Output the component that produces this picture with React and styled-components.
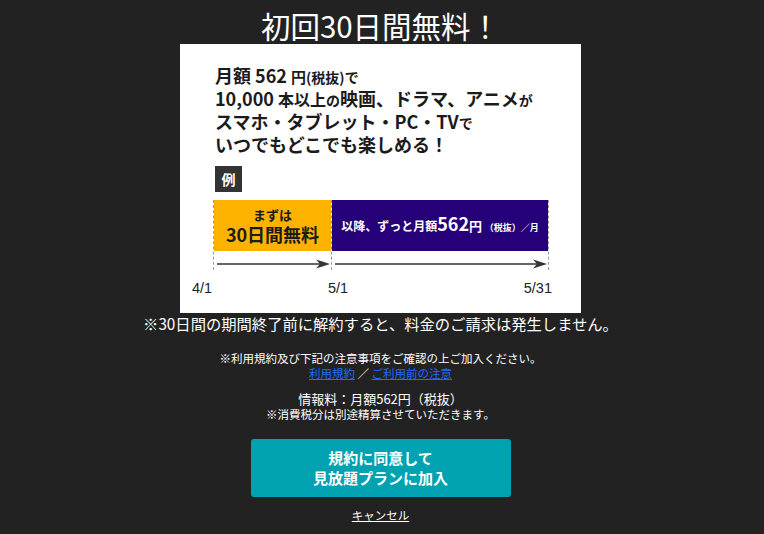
import React from 'react'
import styled, { createGlobalStyle } from 'styled-components'

const GlobalStyle = createGlobalStyle`
  body {
    margin: 0;
    background: #222222;
    font-family: "Noto Sans CJK JP", "Noto Sans", sans-serif;
    color: #ffffff;
  }
`

const Page = styled.div`
  display: flex;
  flex-direction: column;
  align-items: center;
  padding-right: 3px;
  text-align: center;
`

const Title = styled.h1`
  margin: 7px 0 1px;
  font-size: 29.5px;
  font-weight: 400;
  line-height: 36px;
`

const Banner = styled.div`
  box-sizing: border-box;
  width: 401px;
  height: 269px;
  padding-top: 20px;
  background: #ffffff;
  color: #1b1b1b;
  text-align: left;
  display: flex;
  flex-direction: column;
`

const Headline = styled.div`
  margin-left: 35px;
  font-size: 18px;
  font-weight: 700;
  line-height: 23px;
`

const Small = styled.span`
  font-size: ${(p) => p.$size || 14}px;
  line-height: 1;
`

const Badge = styled.div`
  margin: 10px 0 0 35px;
  width: 27px;
  height: 26px;
  background: #333333;
  color: #ffffff;
  font-size: 14px;
  font-weight: 700;
  display: flex;
  align-items: center;
  justify-content: center;
`

const Timeline = styled.div`
  margin: 8px 0 0 33px;
  display: grid;
  grid-template-columns: 118px 218px;
`

const Segment = styled.div`
  border-left: 1px dashed #9a9a9a;
  border-right: ${(p) => (p.$last ? '1px dashed #9a9a9a' : 'none')};
  display: flex;
  flex-direction: column;
`

const Period = styled.div`
  height: 51px;
  background: ${(p) => p.$color};
  color: ${(p) => p.$text};
  font-weight: 700;
  display: flex;
  flex-direction: column;
  align-items: center;
  justify-content: center;
`

const FreeLead = styled.div`
  font-size: 13px;
  line-height: 17px;
`

const FreeMain = styled.div`
  font-size: 18px;
  line-height: 22px;
`

const PaidLine = styled.div`
  font-size: 12px;
  line-height: 22px;
  white-space: nowrap;
`

const ArrowRow = styled.svg`
  display: block;
  width: 100%;
  height: 19px;
`

const Dates = styled.div`
  margin: 10px 0 0 12px;
  width: 360px;
  display: grid;
  grid-template-columns: 136px 1fr auto;
  font-family: "Liberation Sans", Arial, sans-serif;
  font-size: 14.5px;
  line-height: 16px;
  color: #222222;
`

const Caption = styled.p`
  margin: 0;
  font-size: 15.3px;
  line-height: 20px;
`

const Notes = styled.div`
  margin-top: 18px;
  font-size: 11.5px;
  line-height: 15px;
`

const Link = styled.a`
  color: #1f6bff;
  text-decoration: underline;
`

const Info = styled.div`
  margin-top: 10px;
  font-size: 13px;
  line-height: 16px;
`

const Tax = styled.div`
  font-size: 11.5px;
  line-height: 15px;
`

const JoinButton = styled.button`
  margin-top: 17px;
  width: 260px;
  height: 58px;
  border: none;
  border-radius: 3px;
  background: #00a2b2;
  color: #ffffff;
  font-family: inherit;
  font-size: 15px;
  font-weight: 700;
  line-height: 20px;
`

const Cancel = styled.a`
  margin-top: 11px;
  font-size: 11.5px;
  line-height: 15px;
  color: #ffffff;
  text-decoration: underline;
`

function Arrow({ width }) {
  return (
    <ArrowRow viewBox={`0 0 ${width} 19`} preserveAspectRatio="none">
      <line x1="3" y1="13" x2={width - 8} y2="13" stroke="#333" strokeWidth="1.4" />
      <polygon
        points={`${width - 1},13 ${width - 15},8.5 ${width - 11},13 ${width - 15},17.5`}
        fill="#333"
      />
    </ArrowRow>
  )
}

function App() {
  return (
    <Page>
      <GlobalStyle />
      <Title>初回30日間無料！</Title>
      <Banner>
        <Headline>
          <div>
            月額 562 <Small $size={15}>円</Small>
            <Small>(税抜)で</Small>
          </div>
          <div>
            10,000 <Small $size={16}>本以上</Small>
            <Small>の</Small>映画、ドラマ、アニメ<Small>が</Small>
          </div>
          <div>
            スマホ・タブレット・PC・TV<Small>で</Small>
          </div>
          <div>いつでもどこでも楽しめる！</div>
        </Headline>
        <Badge>例</Badge>
        <Timeline>
          <Segment>
            <Period $color="#fdb200" $text="#1b1b1b">
              <FreeLead>まずは</FreeLead>
              <FreeMain>30日間無料</FreeMain>
            </Period>
            <Arrow width={117} />
          </Segment>
          <Segment $last>
            <Period $color="#250078" $text="#ffffff">
              <PaidLine>
                以降、ずっと月額<Small $size={18}>562</Small>
                <Small $size={13}>円</Small> <Small $size={9}>（税抜）／月</Small>
              </PaidLine>
            </Period>
            <Arrow width={216} />
          </Segment>
        </Timeline>
        <Dates>
          <span>4/1</span>
          <span>5/1</span>
          <span>5/31</span>
        </Dates>
      </Banner>
      <Caption>※30日間の期間終了前に解約すると、料金のご請求は発生しません。</Caption>
      <Notes>
        <div>※利用規約及び下記の注意事項をご確認の上ご加入ください。</div>
        <div>
          <Link href="#">利用規約</Link> ／ <Link href="#">ご利用前の注意</Link>
        </div>
      </Notes>
      <Info>情報料：月額562円（税抜）</Info>
      <Tax>※消費税分は別途精算させていただきます。</Tax>
      <JoinButton>
        規約に同意して
        <br />
        見放題プランに加入
      </JoinButton>
      <Cancel href="#">キャンセル</Cancel>
    </Page>
  )
}

export default App
